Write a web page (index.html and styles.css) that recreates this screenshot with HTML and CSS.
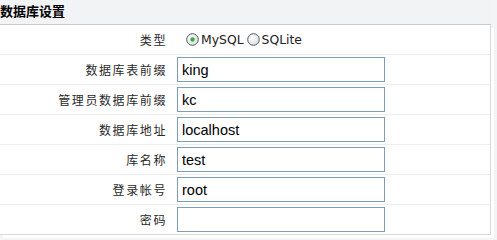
FILE: index.html
```html
<!DOCTYPE html>
<html lang="zh-CN">
<head>
<meta charset="utf-8">
<title>数据库设置</title>
<link rel="stylesheet" href="styles.css">
</head>
<body>
<div class="panel">
  <div class="panel-head">数据库设置</div>
  <div class="panel-body">
    <div class="row">
      <div class="label">类型</div>
      <div class="field radios">
        <label class="radio">
          <svg class="radio-icon" width="13" height="13" viewBox="0 0 13 13">
            <defs>
              <radialGradient id="rg1" cx="0.35" cy="0.35" r="0.8">
                <stop offset="0" stop-color="#ffffff"/>
                <stop offset="1" stop-color="#d8dcd6"/>
              </radialGradient>
            </defs>
            <circle cx="6.5" cy="6.5" r="5.8" fill="url(#rg1)" stroke="#4a5a6a" stroke-width="1"/>
            <circle cx="6.5" cy="6.5" r="2.2" fill="#3ba84a"/>
          </svg>
          <span>MySQL</span>
        </label>
        <label class="radio">
          <svg class="radio-icon" width="13" height="13" viewBox="0 0 13 13">
            <defs>
              <radialGradient id="rg2" cx="0.35" cy="0.35" r="0.8">
                <stop offset="0" stop-color="#ffffff"/>
                <stop offset="1" stop-color="#d8dcd6"/>
              </radialGradient>
            </defs>
            <circle cx="6.5" cy="6.5" r="5.8" fill="url(#rg2)" stroke="#4a5a6a" stroke-width="1"/>
          </svg>
          <span>SQLite</span>
        </label>
      </div>
    </div>
    <div class="row">
      <div class="label">数据库表前缀</div>
      <div class="field"><input class="text" type="text" value="king"></div>
    </div>
    <div class="row">
      <div class="label">管理员数据库前缀</div>
      <div class="field"><input class="text" type="text" value="kc"></div>
    </div>
    <div class="row">
      <div class="label">数据库地址</div>
      <div class="field"><input class="text" type="text" value="localhost"></div>
    </div>
    <div class="row">
      <div class="label">库名称</div>
      <div class="field"><input class="text" type="text" value="test"></div>
    </div>
    <div class="row">
      <div class="label">登录帐号</div>
      <div class="field"><input class="text" type="text" value="root"></div>
    </div>
    <div class="row last">
      <div class="label">密码</div>
      <div class="field"><input class="text" type="password" value=""></div>
    </div>
  </div>
</div>
</body>
</html>
```
FILE: styles.css
```css
html, body {
  margin: 0;
  padding: 0;
}
body {
  width: 497px;
  height: 240px;
  overflow: hidden;
  background: #f3f4f5;
  font-family: "Noto Sans CJK SC", "DejaVu Sans", sans-serif;
  color: #222;
}
.panel {
  width: 491px;
}
.panel-head {
  height: 24px;
  border-bottom: 1px solid #c9cbcc;
  background: #f2f3f4;
  font-size: 13px;
  font-weight: bold;
  line-height: 21px;
  color: #000;
}
.panel-body {
  background: #ffffff;
  border-right: 1px solid #d6dadc;
  border-bottom: 1px solid #d6dadc;
  box-shadow: 3px 3px 0 #ffffff;
}
.row {
  display: flex;
  align-items: center;
  height: 29px;
  border-bottom: 1px solid #eceeee;
}
.row.last {
  border-bottom: none;
  height: 29px;
}
.label {
  width: 167px;
  text-align: right;
  font-size: 12px;
  letter-spacing: 1.6px;
  color: #2a2a2a;
  line-height: 16px;
}
.field {
  margin-left: 10px;
  display: flex;
  align-items: center;
}
.radios {
  margin-left: 19px;
  gap: 3px;
}
.radio {
  display: flex;
  align-items: center;
  font-family: "DejaVu Sans", sans-serif;
  font-size: 12.4px;
  color: #222;
}
.radio-icon {
  display: block;
  margin-right: 2px;
}
.text {
  box-sizing: border-box;
  width: 208px;
  height: 25px;
  margin: 0;
  padding: 0 4px;
  border: 1px solid #7f9db9;
  background: #fff;
  font-family: "Liberation Sans", Arial, sans-serif;
  font-size: 14.5px;
  color: #000;
  outline: none;
}
```
